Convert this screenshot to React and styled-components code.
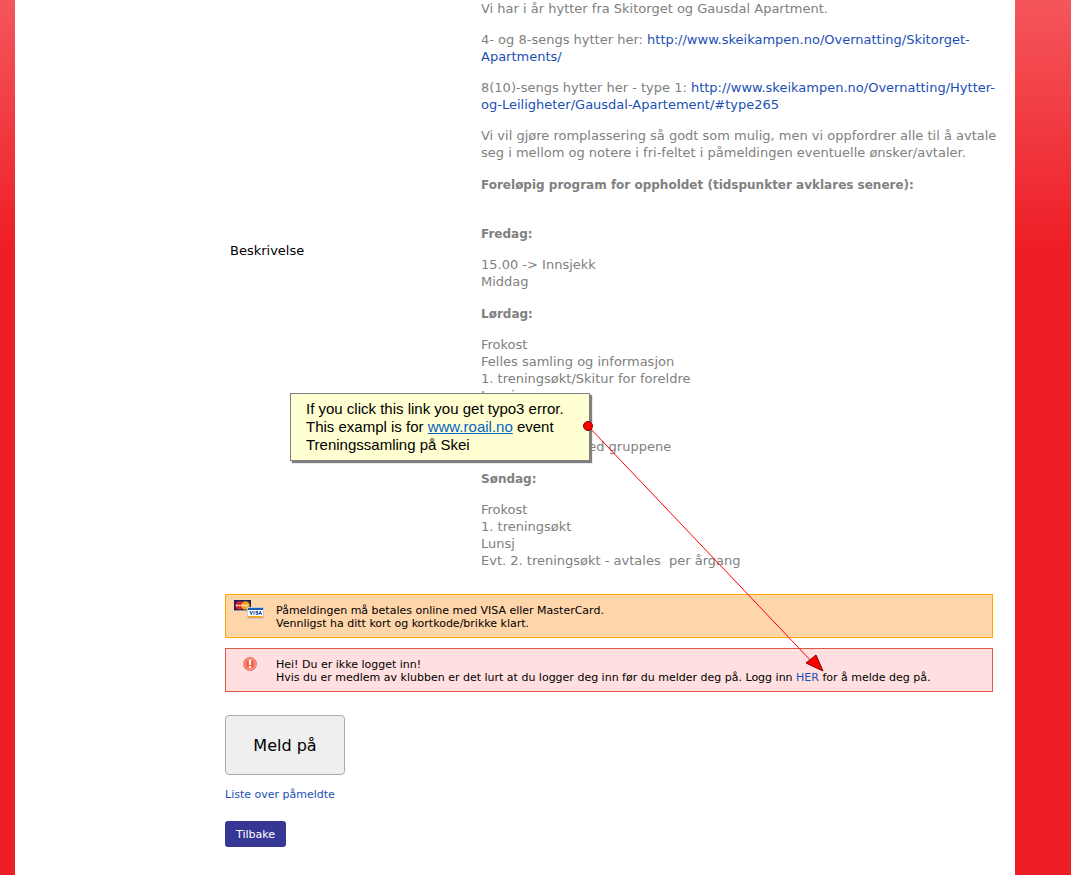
import React from "react";
import styled, { createGlobalStyle } from "styled-components";

const GlobalStyle = createGlobalStyle`
  * {
    box-sizing: border-box;
  }
  body {
    margin: 0;
    background: #ee1c24 linear-gradient(#f4565c, #ee1c24) no-repeat 0 0 / 100% 256px;
    font-family: Verdana, "DejaVu Sans", sans-serif;
    font-size: 11px;
    color: #000;
  }
`;

const Page = styled.main`
  position: relative;
  min-height: 100vh;
  margin: 0 56px 0 15px;
  padding: 0 22px 28px 210px;
  background: #fff;
`;

const EventRow = styled.section`
  display: grid;
  grid-template-columns: 251px 1fr;
  align-items: center;
  margin-bottom: 11px;
  padding-left: 5px;
`;

const RowLabel = styled.h2`
  margin: 0;
  padding-bottom: 82px;
  font-size: 13px;
  line-height: 17px;
  font-weight: normal;
`;

const Description = styled.div`
  font-size: 13px;
  line-height: 17px;
  white-space: nowrap;
  color: #808080;
`;

const Paragraph = styled.p`
  margin: 0 0 14px;
`;

const Heading = styled.h3`
  margin: 0 0 13px;
  padding: 2px 0 ${props => (props.$spaced ? "17px" : "0")};
  font-size: 12px;
  line-height: 17px;
`;

const Link = styled.a`
  color: #1b4fb5;
  text-decoration: none;
`;

const Notice = styled.div`
  display: grid;
  grid-template-columns: 50px 1fr;
  height: 44px;
  margin-bottom: 10px;
  border: 1px solid ${props => (props.$error ? "#e0584a" : "#ffa500")};
  background: ${props => (props.$error ? "#ffdfdf" : "#ffd5aa")};
  line-height: 13px;
`;

const NoticeIcon = styled.span`
  display: flex;
  justify-content: center;
  align-items: flex-start;
  padding: ${props => (props.$error ? "7px 2px 0 0" : "5px 4px 0 0")};
`;

const NoticeText = styled.p`
  margin: 0;
  padding-top: 9px;
`;

const Actions = styled.div`
  display: flex;
  flex-direction: column;
  align-items: flex-start;
  padding-top: 13px;
`;

const SignUpButton = styled.button`
  width: 120px;
  height: 60px;
  margin-bottom: 13px;
  padding: 0;
  border: 1px solid #aaa;
  border-radius: 4px;
  background: #efefef;
  color: #000;
  font-family: inherit;
  font-size: 16px;
`;

const ListLink = styled(Link)`
  margin-bottom: 19px;
  line-height: 14px;
`;

const BackButton = styled.button`
  height: 26px;
  padding: 0 11px;
  border: 0;
  border-radius: 3px;
  background: #363795;
  color: #fff;
  font-family: inherit;
  font-size: 11px;
`;

const Callout = styled.aside`
  position: absolute;
  top: 393px;
  left: 275px;
  width: 300px;
  height: 68px;
  padding: 6px 15px;
  border: 1px solid #808080;
  background: #ffffd2;
  box-shadow: 2px 2px 1px #808080;
  font-family: "Liberation Sans", Arial, sans-serif;
  font-size: 15px;
  line-height: 18px;
  white-space: nowrap;

  a {
    color: #0563c1;
  }
`;

const Arrow = styled.svg`
  position: absolute;
  top: 420px;
  left: 567px;
  pointer-events: none;
`;

function CardsIcon() {
  return (
    <svg width="30" height="19" viewBox="0 0 30 19" aria-hidden="true">
      <rect width="17" height="11" fill="#1b2258" />
      <rect y="10" width="17" height="1" fill="#8a8fae" />
      <circle cx="5.5" cy="5.5" r="4.3" fill="#d9242b" />
      <circle cx="11.5" cy="5.5" r="4.3" fill="#f6a51c" />
      <path d="M2 5.5h12.5" stroke="#ffe9d9" strokeWidth="1.6" strokeDasharray="2 .6" />
      <rect x="13" y="7" width="17" height="12" fill="#c9c9d2" />
      <rect x="14" y="8" width="15" height="10" fill="#fff" />
      <rect x="14" y="8" width="15" height="2" fill="#1d5cb8" />
      <rect x="14" y="16" width="15" height="2" fill="#f0a92d" />
      <path
        d="M16 11l1.2 3.5L18.5 11M20 11v3.7M24 11.4h-2v1.4h2v1.5h-2.3M25 14.7l1.3-3.5 1.3 3.5M25.6 13.5h1.6"
        fill="none"
        stroke="#1d4fa8"
      />
    </svg>
  );
}

function ErrorIcon() {
  return (
    <svg width="16" height="16" viewBox="0 0 16 16" aria-hidden="true">
      <circle cx="8" cy="8" r="6.5" fill="#f4563f" stroke="#f0806c" />
      <circle cx="8" cy="8" r="5.2" fill="#f7644c" stroke="#fbb3a5" />
      <path d="M6.8 3.8h2.4L8.8 9H7.2z" fill="#fff" />
      <rect x="7" y="10" width="2" height="2" fill="#fff" />
    </svg>
  );
}

function App() {
  return (
    <>
      <GlobalStyle />
      <Page>
        <EventRow>
          <RowLabel>Beskrivelse</RowLabel>
          <Description>
            <Paragraph>Vi har i år hytter fra Skitorget og Gausdal Apartment.</Paragraph>
            <Paragraph>
              4- og 8-sengs hytter her:{" "}
              <Link href="#skitorget">
                http://www.skeikampen.no/Overnatting/Skitorget-
                <br />
                Apartments/
              </Link>
            </Paragraph>
            <Paragraph>
              8(10)-sengs hytter her - type 1:{" "}
              <Link href="#type265">
                http://www.skeikampen.no/Overnatting/Hytter-
                <br />
                og-Leiligheter/Gausdal-Apartement/#type265
              </Link>
            </Paragraph>
            <Paragraph>
              Vi vil gjøre romplassering så godt som mulig, men vi oppfordrer alle til å avtale
              <br />
              seg i mellom og notere i fri-feltet i påmeldingen eventuelle ønsker/avtaler.
            </Paragraph>
            <Heading $spaced>Foreløpig program for oppholdet (tidspunkter avklares senere):</Heading>
            <Heading>Fredag:</Heading>
            <Paragraph>
              15.00 -&gt; Innsjekk
              <br />
              Middag
            </Paragraph>
            <Heading>Lørdag:</Heading>
            <Paragraph>
              Frokost
              <br />
              Felles samling og informasjon
              <br />
              1. treningsøkt/Skitur for foreldre
              <br />
              Lunsj
              <br />
              <br />
              <br />
              2. treningsøkt med gruppene
            </Paragraph>
            <Heading>Søndag:</Heading>
            <Paragraph>
              Frokost
              <br />
              1. treningsøkt
              <br />
              Lunsj
              <br />
              Evt. 2. treningsøkt - avtales &nbsp;per årgang
            </Paragraph>
          </Description>
        </EventRow>

        <Notice>
          <NoticeIcon>
            <CardsIcon />
          </NoticeIcon>
          <NoticeText>
            Påmeldingen må betales online med VISA eller MasterCard.
            <br />
            Vennligst ha ditt kort og kortkode/brikke klart.
          </NoticeText>
        </Notice>
        <Notice $error>
          <NoticeIcon $error>
            <ErrorIcon />
          </NoticeIcon>
          <NoticeText>
            Hei! Du er ikke logget inn!
            <br />
            Hvis du er medlem av klubben er det lurt at du logger deg inn før du melder deg på. Logg inn{" "}
            <Link href="#login">HER</Link> for å melde deg på.
          </NoticeText>
        </Notice>

        <Actions>
          <SignUpButton type="button">Meld på</SignUpButton>
          <ListLink href="#list">Liste over påmeldte</ListLink>
          <BackButton type="button">Tilbake</BackButton>
        </Actions>

        <Callout>
          If you click this link you get typo3 error.
          <br />
          This exampl is for <a href="#roail">www.roail.no</a> event
          <br />
          Treningssamling på Skei
        </Callout>
        <Arrow width="245" height="256" viewBox="0 0 245 256" aria-hidden="true">
          <path d="M6 6L232 244" stroke="#f00" />
          <circle cx="6" cy="6" r="4.5" fill="#f00" stroke="#800000" />
          <path d="M241 251L224 243L234 235Z" fill="#f00" stroke="#800000" />
        </Arrow>
      </Page>
    </>
  );
}

export default App;
